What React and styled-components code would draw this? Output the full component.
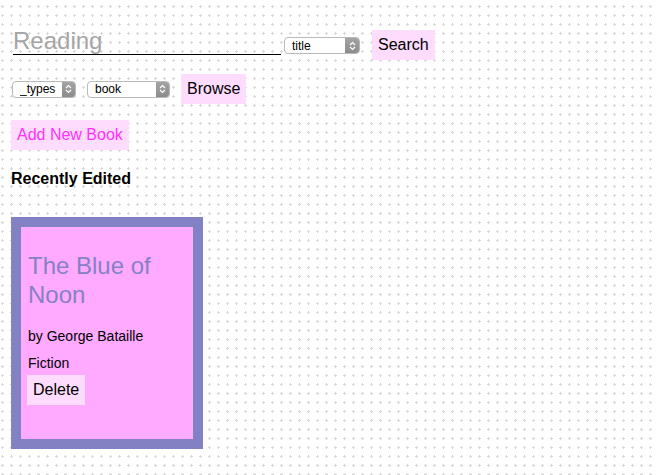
import styled, { createGlobalStyle } from "styled-components";

const GlobalStyle = createGlobalStyle`
    html {
        background: #fff url("data:image/svg+xml,%3Csvg xmlns='http://www.w3.org/2000/svg' width='9' height='9'%3E%3Cpath d='M1 6h3v1H1zM2 5h1v3H2z' fill='%23d8d8d8'/%3E%3C/svg%3E");
    }
    body {
        margin: 0;
        font-family: "Liberation Sans", Arial, sans-serif;
        color: #000;
        background: transparent;
    }
`;

const Page = styled.div`
    display: flex;
    flex-direction: column;
    align-items: flex-start;
    padding: 27px 0 0 11px;
`;

const Row = styled.div`
    display: flex;
    align-items: ${(p) => p.$align ?? "center"};
    gap: ${(p) => p.$gap ?? 11}px;
    margin-top: ${(p) => p.$top ?? 0}px;
`;

const SearchInput = styled.input`
    width: 268px;
    margin: 0 0 5px 2px;
    padding: 0;
    border: none;
    border-bottom: 1px solid #000;
    background: transparent;
    font-family: inherit;
    font-size: 24px;
    line-height: 27px;
    outline: none;
    &::placeholder {
        color: #a5a5a5;
    }
`;

const SelectBox = styled.div`
    display: flex;
    width: ${(p) => p.$width}px;
    height: 17px;
    box-sizing: border-box;
    border: 1px solid #b9b9b9;
    border-radius: 4px;
    background: #fff;
    overflow: hidden;
    margin-left: ${(p) => p.$left ?? 0}px;
    margin-bottom: ${(p) => p.$bottom ?? 0}px;
`;

const NativeSelect = styled.select`
    flex: 1;
    min-width: 0;
    appearance: none;
    border: none;
    background: transparent;
    padding: 0 0 0 7px;
    font-family: inherit;
    font-size: 12px;
    color: #000;
    outline: none;
`;

const Stepper = styled.span`
    width: ${(p) => p.$width ?? 14}px;
    display: flex;
    align-items: center;
    justify-content: center;
    background: linear-gradient(#a3a3a3, #8c8c8c);
`;

const PinkButton = styled.button`
    border: none;
    background: #fddcfd;
    padding: 6px;
    font-family: inherit;
    font-size: 16px;
    line-height: 18px;
    color: ${(p) => p.$color ?? "#000"};
    cursor: pointer;
    margin-top: ${(p) => p.$top ?? 0}px;
    margin-left: ${(p) => p.$left ?? 0}px;
`;

const Heading = styled.h3`
    margin: 20px 0 0;
    font-size: 16px;
    line-height: 18px;
    font-weight: bold;
`;

const Card = styled.div`
    margin-top: 29px;
    width: 192px;
    height: 232px;
    box-sizing: border-box;
    border: 10px solid #8281c3;
    background: #ffaaff;
    padding: 24px 6px 0;
    display: flex;
    flex-direction: column;
    align-items: flex-start;
`;

const Title = styled.h2`
    margin: 0 0 0 1px;
    font-size: 24px;
    line-height: 29px;
    font-weight: normal;
    color: #8581c6;
`;

const Line = styled.p`
    margin: ${(p) => p.$top}px 0 0 1px;
    font-size: 14px;
    line-height: 16px;
`;

function Chevrons() {
    return (
        <svg width="7" height="10" viewBox="0 0 7 10">
            <path d="M1 4L3.5 1.5L6 4M1 6L3.5 8.5L6 6" fill="none" stroke="#fff" strokeWidth="1.2" />
        </svg>
    );
}

function Select({ width, left, bottom, options, stepper }) {
    return (
        <SelectBox $width={width} $left={left} $bottom={bottom}>
            <NativeSelect defaultValue={options[0]}>
                {options.map((o) => (
                    <option key={o}>{o}</option>
                ))}
            </NativeSelect>
            <Stepper $width={stepper}>
                <Chevrons />
            </Stepper>
        </SelectBox>
    );
}

export default function App() {
    return (
        <>
            <GlobalStyle />
            <Page>
                <Row $align="flex-end" $gap={0}>
                    <SearchInput placeholder="Reading" />
                    <Select width={76} left={3} bottom={6} options={["title", "author"]} stepper={14} />
                    <PinkButton $left={12}>Search</PinkButton>
                </Row>
                <Row $top={14} $gap={11}>
                    <Select width={64} left={1} options={["_types"]} stepper={13} />
                    <Select width={83} options={["book", "article"]} stepper={13} />
                    <PinkButton>Browse</PinkButton>
                </Row>
                <PinkButton $top={16} $color="#ff33ff">Add New Book</PinkButton>
                <Heading>Recently Edited</Heading>
                <Card>
                    <Title>The Blue of Noon</Title>
                    <Line $top={19}>by George Bataille</Line>
                    <Line $top={11}>Fiction</Line>
                    <PinkButton $top={4}>Delete</PinkButton>
                </Card>
            </Page>
        </>
    );
}
